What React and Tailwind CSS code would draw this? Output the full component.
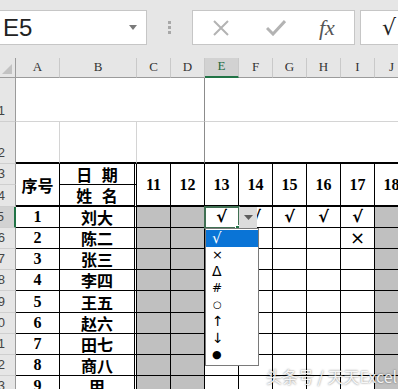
import React from "react";

const cjk = "font-['Noto_Sans_CJK_SC',sans-serif]";
const serifNum = "font-['Liberation_Serif',serif]";

const cols = ["A", "B", "C", "D", "E", "F", "G", "H", "I", "J"];

const people = [
    ["1", "刘大"],
    ["2", "陈二"],
    ["3", "张三"],
    ["4", "李四"],
    ["5", "王五"],
    ["6", "赵六"],
    ["7", "田七"],
    ["8", "商八"],
    ["9", "甲"],
];

// marks per row for columns E..I
const marks = {
    0: ["√", "√", "√", "√", "√"],
    1: ["", "", "", "", "×"],
};

const ColHead = ({ label, active }) => (
    <div
        className={
            "flex items-end justify-center pb-[1px] text-[13px] font-['Liberation_Serif',serif] border-r border-r-[#c9c9c9] " +
            (active
                ? "bg-[#d2d2d2] text-[#1e6b41] border-b-2 border-b-[#217346]"
                : "bg-[#e6e6e6] text-[#333] border-b border-b-[#9b9b9b]")
        }
    >
        {label}
    </div>
);

const RowHead = ({ n, active, tall }) => (
    <div
        className={
            "flex justify-end pr-[10px] overflow-hidden text-[13px] font-['Liberation_Sans',sans-serif] text-[#444] border-b border-b-[#cfcfcf] " +
            (tall ? "items-end pb-[1px] " : "items-center ") +
            (active ? "bg-[#d2d2d2] border-r-2 border-r-[#217346]" : "bg-[#e6e6e6] border-r border-r-[#9b9b9b]")
        }
    >
        {n}
    </div>
);

const Toolbar = () => (
    <div className="h-[58px] bg-[#e6e6e6] flex items-start pt-[10px]">
        <div className="w-[147px] h-[35px] bg-white border border-l-0 border-[#c6c6c6] flex items-center justify-between pl-[3px] pr-[9px]">
            <span className="text-[24px] leading-none text-[#222] font-['Liberation_Sans',sans-serif]">E5</span>
            <svg width="8" height="5" viewBox="0 0 8 5">
                <path d="M0 0h8L4 5z" fill="#7a7a7a" />
            </svg>
        </div>
        <div className="w-[45px] h-[35px] flex flex-col items-center justify-center gap-[2px]">
            <span className="w-[3px] h-[3px] bg-[#a8a8a8]" />
            <span className="w-[3px] h-[3px] bg-[#a8a8a8]" />
            <span className="w-[3px] h-[3px] bg-[#a8a8a8]" />
        </div>
        <div className="w-[163px] h-[35px] bg-white border border-[#c6c6c6] flex items-center pl-[19px]">
            <svg width="18" height="18" viewBox="0 0 18 18">
                <path d="M2 2l14 14M16 2L2 16" stroke="#b3b3b3" strokeWidth="2" />
            </svg>
            <svg className="ml-[36px]" width="20" height="16" viewBox="0 0 20 16">
                <path d="M1 8l6 6L19 1" stroke="#b3b3b3" strokeWidth="3" fill="none" />
            </svg>
            <span className="ml-[33px] text-[22px] italic text-[#555] font-['Liberation_Serif',serif] leading-none">fx</span>
        </div>
        <div className="ml-[5px] flex-1 h-[35px] bg-white border border-r-0 border-[#c6c6c6] flex items-center pl-[21px]">
            <span className="text-[22px] text-[#222] font-['DejaVu_Sans',sans-serif] leading-none">√</span>
        </div>
    </div>
);

const Check = ({ v }) =>
    v === "×" ? (
        <span className="text-[18px] leading-none text-black font-['DejaVu_Sans',sans-serif]">{v}</span>
    ) : (
        <span className="text-[16px] leading-none text-black font-bold italic font-['DejaVu_Sans',sans-serif]">{v}</span>
    );

const Sheet = () => {
    const b = "border-b border-r border-black";
    return (
        <div className="grid grid-cols-[16px_44px_77px_34px_34px_34px_34px_34px_34px_34px_34px] grid-rows-[20px_44px_42px_21px_22px_21px_21px_21px_21px_22px_21px_21px_21px_21px] bg-white">
            {/* column headers */}
            <div className="bg-[#e6e6e6] border-r border-r-[#9b9b9b] border-b border-b-[#9b9b9b] flex items-end justify-end pr-[3px] pb-[3px]">
                <svg width="10" height="10" viewBox="0 0 10 10">
                    <path d="M10 0v10H0z" fill="#c2c2c2" />
                </svg>
            </div>
            {cols.map((c) => (
                <ColHead key={c} label={c} active={c === "E"} />
            ))}

            {/* row 1 */}
            <RowHead n="1" tall />
            <div className="col-span-4 border-b border-b-[#d4d4d4] border-r border-r-[#8c8c8c]" />
            <div className="col-span-6 border-b border-b-[#d4d4d4]" />

            {/* row 2 */}
            <RowHead n="2" tall />
            <div className="border-r border-r-[#d4d4d4] border-b-2 border-b-black" />
            <div className="border-r border-r-[#d4d4d4] border-b-2 border-b-black" />
            <div className="col-span-2 border-r border-r-[#8c8c8c] border-b-2 border-b-black" />
            <div className="col-span-6 border-b-2 border-b-black" />

            {/* rows 3-4 header */}
            <RowHead n="3" />
            <div className={"row-span-2 border-r border-black border-b-2 flex items-center justify-center text-[16px] font-bold " + cjk}>序号</div>
            <div className={"border-b border-black border-r-[3px] border-double flex items-center justify-center text-[16px] font-bold [word-spacing:6px] " + cjk}>日 期</div>
            {["11", "12", "13", "14", "15", "16", "17", "18"].map((d) => (
                <div key={d} className={"row-span-2 border-r border-b-2 border-black flex items-center justify-center text-[16px] font-bold " + serifNum}>
                    {d}
                </div>
            ))}
            <RowHead n="4" />
            <div className={"border-b-2 border-black border-r-[3px] border-double flex items-center justify-center text-[16px] font-bold [word-spacing:6px] " + cjk}>姓 名</div>

            {/* data rows */}
            {people.map(([no, name], i) => (
                <React.Fragment key={no}>
                    <RowHead n={String(i + 5)} active={i === 0} />
                    <div className={b + " flex items-center justify-center text-[16px] font-bold " + serifNum}>{no}</div>
                    <div className={"border-b border-black border-r-[3px] border-double flex items-center justify-center text-[16px] font-bold " + cjk}>{name}</div>
                    <div className={b + " bg-[#c0c0c0]"} />
                    <div className={b + " bg-[#c0c0c0]"} />
                    {[0, 1, 2, 3, 4].map((k) => (
                        <div key={k} className={b + " flex items-center justify-center"}>
                            {marks[i] && marks[i][k] ? <Check v={marks[i][k]} /> : null}
                        </div>
                    ))}
                    <div className={b + " bg-[#c0c0c0]"} />
                </React.Fragment>
            ))}
        </div>
    );
};

const items = [
    ["√", "text-[15px]"],
    ["×", "text-[13px]"],
    ["Δ", "text-[14px]"],
    ["#", "text-[12px]"],
    ["○", "text-[10px] font-bold pl-[7px]"],
    ["↑", "text-[14px]"],
    ["↓", "text-[14px]"],
    ["●", "text-[11px]"],
];

const Dropdown = () => (
    <>
        {/* active cell outline */}
        <div className="absolute left-[204px] top-[206px] w-[36px] h-[23px] border-2 border-[#3f6f52]" />
        <div className="absolute left-[235px] top-[225px] w-[5px] h-[5px] bg-[#217346] border border-white" />
        {/* arrow button */}
        <div className="absolute left-[239px] top-[207px] w-[18px] h-[21px] bg-[#dcdcdc] flex items-center justify-center">
            <svg width="9" height="5" viewBox="0 0 9 5">
                <path d="M0 0h9L4.5 5z" fill="#5e5e5e" />
            </svg>
        </div>
        {/* list */}
        <div className="absolute left-[205px] top-[228px] w-[54px] h-[138px] bg-white border border-[#7a7a7a] flex flex-col pt-[1px]">
            {items.map(([it, size], i) => (
                <div
                    key={it}
                    className={
                        "h-[16.6px] flex items-center pl-[6px] leading-none font-['DejaVu_Sans',sans-serif] " +
                        size +
                        (i === 0 ? " bg-[#0a74d6] text-white" : " text-black")
                    }
                >
                    {it}
                </div>
            ))}
        </div>
    </>
);

export default function App() {
    return (
        <div className="relative w-[398px] h-[389px] overflow-hidden bg-white">
            <Toolbar />
            <Sheet />
            <Dropdown />
            <div className={"absolute left-[266px] top-[364px] text-[16px] text-white/90 [text-shadow:0_0_2px_rgba(0,0,0,0.6)] " + cjk}>
                头条号 / 天天Excel
            </div>
        </div>
    );
}
